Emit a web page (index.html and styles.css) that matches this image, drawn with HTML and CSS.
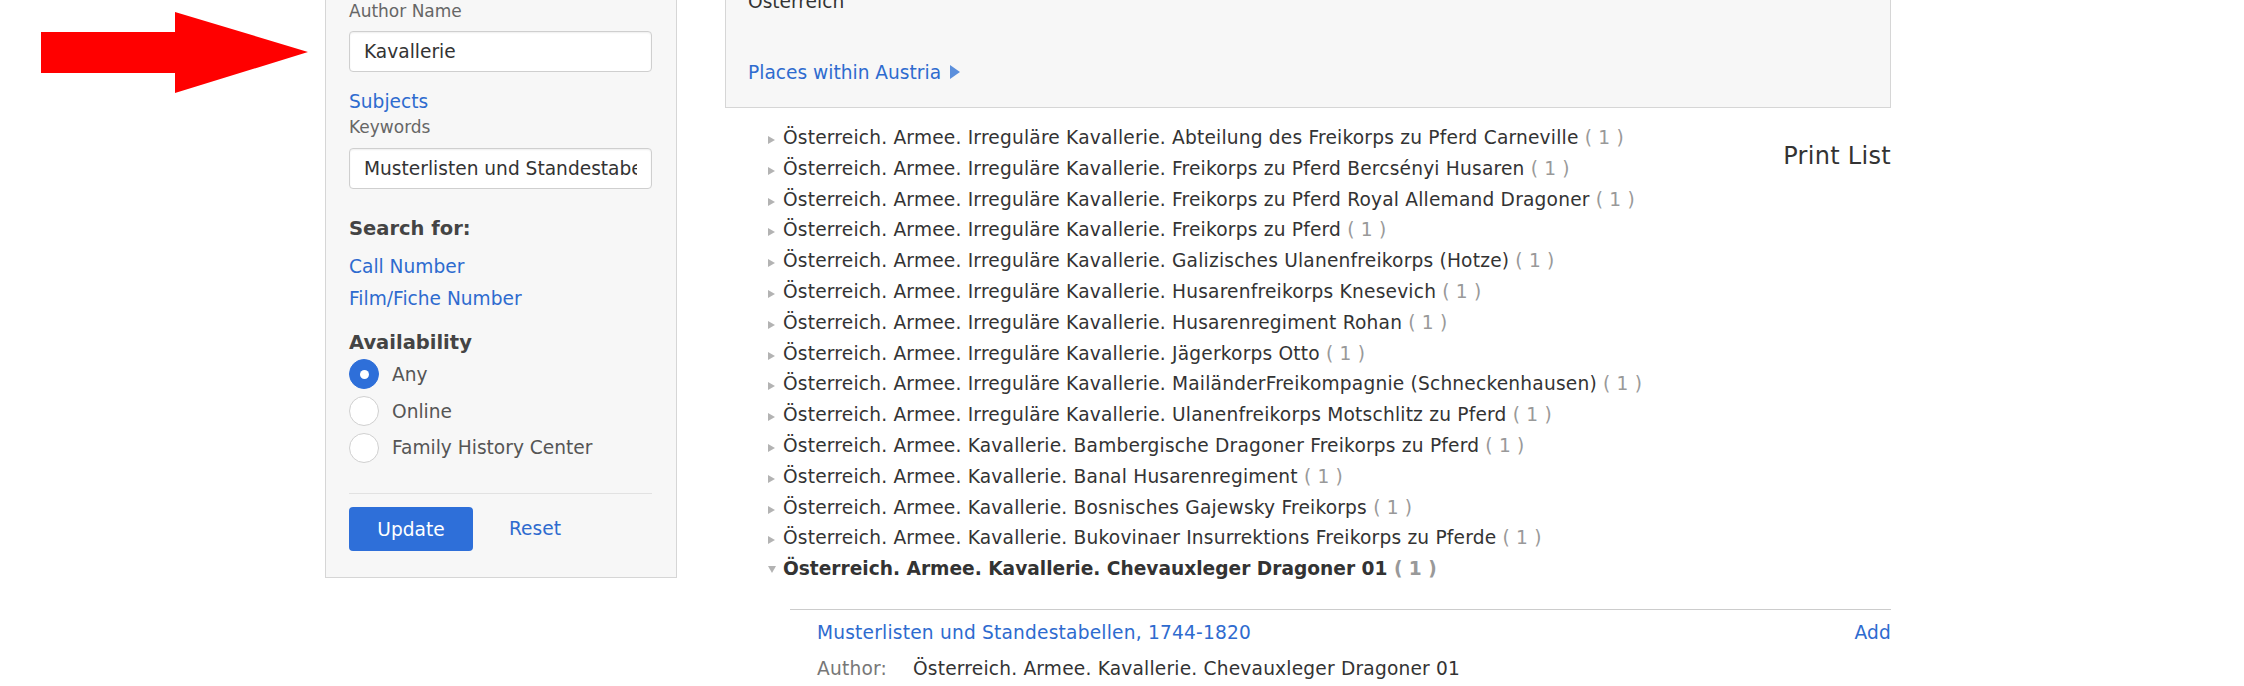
FILE: index.html
```html
<!DOCTYPE html>
<html lang="de">
<head>
  <meta charset="UTF-8" />
  <title>Catalog - Subjects</title>
  <link rel="stylesheet" href="styles.css">
</head>
<body>

  <!-- annotation arrow pointing at the author field -->
  <svg class="pointer-arrow" width="320" height="100" viewBox="0 0 320 100">
    <polygon points="41,32 175,32 175,12 308,52 175,93 175,73 41,73" fill="#ff0000"/>
  </svg>

  <div class="page">

    <aside class="filters">
      <label class="field-label">Author Name</label>
      <input class="text-input" type="text" value="Kavallerie">

      <a class="filter-link subjects" href="#">Subjects</a>
      <label class="field-label keywords">Keywords</label>
      <input class="text-input keywords-input" type="text" value="Musterlisten und Standestabellen, 1744-1820">

      <h3 class="filter-heading search-for">Search for:</h3>
      <a class="filter-link row-link" href="#">Call Number</a>
      <a class="filter-link row-link" href="#">Film/Fiche Number</a>

      <h3 class="filter-heading availability">Availability</h3>
      <div class="radio-row"><span class="radio checked"></span>Any</div>
      <div class="radio-row"><span class="radio"></span>Online</div>
      <div class="radio-row"><span class="radio"></span>Family History Center</div>

      <div class="actions">
        <button class="btn-update">Update</button>
        <a class="filter-link" href="#">Reset</a>
      </div>
    </aside>

    <main class="results">
      <div class="place-box">
        <div class="place-name">Österreich</div>
        <a class="places-within" href="#">Places within Austria <span class="arrow-right"></span></a>
      </div>

      <div class="list-row">
        <ul class="subject-list">
          <li><span class="toggle"></span>Österreich. Armee. Irreguläre Kavallerie. Abteilung des Freikorps zu Pferd Carneville <span class="count">( 1 )</span></li>
          <li><span class="toggle"></span>Österreich. Armee. Irreguläre Kavallerie. Freikorps zu Pferd Bercsényi Husaren <span class="count">( 1 )</span></li>
          <li><span class="toggle"></span>Österreich. Armee. Irreguläre Kavallerie. Freikorps zu Pferd Royal Allemand Dragoner <span class="count">( 1 )</span></li>
          <li><span class="toggle"></span>Österreich. Armee. Irreguläre Kavallerie. Freikorps zu Pferd <span class="count">( 1 )</span></li>
          <li><span class="toggle"></span>Österreich. Armee. Irreguläre Kavallerie. Galizisches Ulanenfreikorps (Hotze) <span class="count">( 1 )</span></li>
          <li><span class="toggle"></span>Österreich. Armee. Irreguläre Kavallerie. Husarenfreikorps Knesevich <span class="count">( 1 )</span></li>
          <li><span class="toggle"></span>Österreich. Armee. Irreguläre Kavallerie. Husarenregiment Rohan <span class="count">( 1 )</span></li>
          <li><span class="toggle"></span>Österreich. Armee. Irreguläre Kavallerie. Jägerkorps Otto <span class="count">( 1 )</span></li>
          <li><span class="toggle"></span>Österreich. Armee. Irreguläre Kavallerie. MailänderFreikompagnie (Schneckenhausen) <span class="count">( 1 )</span></li>
          <li><span class="toggle"></span>Österreich. Armee. Irreguläre Kavallerie. Ulanenfreikorps Motschlitz zu Pferd <span class="count">( 1 )</span></li>
          <li><span class="toggle"></span>Österreich. Armee. Kavallerie. Bambergische Dragoner Freikorps zu Pferd <span class="count">( 1 )</span></li>
          <li><span class="toggle"></span>Österreich. Armee. Kavallerie. Banal Husarenregiment <span class="count">( 1 )</span></li>
          <li><span class="toggle"></span>Österreich. Armee. Kavallerie. Bosnisches Gajewsky Freikorps <span class="count">( 1 )</span></li>
          <li><span class="toggle"></span>Österreich. Armee. Kavallerie. Bukovinaer Insurrektions Freikorps zu Pferde <span class="count">( 1 )</span></li>
          <li class="open"><span class="toggle"></span>Österreich. Armee. Kavallerie. Chevauxleger Dragoner 01 <span class="count">( 1 )</span></li>
        </ul>
        <a class="print-list" href="#">Print List</a>
      </div>

      <div class="title-detail">
        <div class="title-row">
          <a class="title-link" href="#">Musterlisten und Standestabellen, 1744-1820</a>
          <a class="title-link" href="#">Add</a>
        </div>
        <div class="author-row">
          <span class="author-label">Author:</span>
          <span>Österreich. Armee. Kavallerie. Chevauxleger Dragoner 01</span>
        </div>
      </div>
    </main>

  </div>

</body>
</html>
```

FILE: styles.css
```css
body {
  margin: 0;
  background: #fff;
  font-family: "DejaVu Sans", Verdana, sans-serif;
  color: #333;
  overflow: hidden;
}

a {
  color: #2e6bcf;
  text-decoration: none;
}

.pointer-arrow {
  position: absolute;
  left: 0;
  top: 0;
}

.page {
  display: flex;
  align-items: flex-start;
  gap: 48px;
  padding-left: 325px;
  margin-top: -40px;
}

/* left filter panel */
.filters {
  width: 303px;
  background: #f7f7f7;
  border: 1px solid #d6d6d6;
  padding: 39px 24px 26px 23px;
  display: flex;
  flex-direction: column;
  align-items: flex-start;
}

.field-label {
  font-size: 17px;
  line-height: 22px;
  color: #666;
}

.keywords {
  margin-top: 2px;
}

.text-input {
  box-sizing: border-box;
  width: 303px;
  height: 41px;
  margin-top: 9px;
  padding: 0 14px;
  border: 1px solid #cfcfcf;
  border-radius: 4px;
  box-shadow: inset 0 1px 2px rgba(0, 0, 0, 0.07);
  background: #fff;
  font-family: inherit;
  font-size: 18.6px;
  color: #333;
}

.keywords-input {
  margin-top: 10px;
}

.filter-link {
  font-size: 18.6px;
  line-height: 24px;
}

.subjects {
  margin-top: 18px;
}

.filter-heading {
  margin: 13px 0 0;
  font-size: 19.5px;
  line-height: 26px;
  font-weight: bold;
  color: #444;
}

.search-for {
  margin-top: 27px;
  margin-bottom: 9px;
}

.availability {
  margin-top: 15px;
}

.row-link {
  line-height: 32px;
}

.radio-row {
  display: flex;
  align-items: center;
  gap: 13px;
  height: 36.7px;
  font-size: 18.6px;
  color: #555;
}

.radio {
  box-sizing: border-box;
  width: 30px;
  height: 30px;
  border-radius: 50%;
  border: 1px solid #d0d0d0;
  background: #fff;
  display: flex;
  align-items: center;
  justify-content: center;
}

.radio.checked {
  background: #2e6fd9;
  border-color: #2e6fd9;
}

.radio.checked::after {
  content: "";
  width: 9px;
  height: 9px;
  border-radius: 50%;
  background: #fff;
}

.actions {
  align-self: stretch;
  margin-top: 27px;
  padding-top: 13px;
  border-top: 1px solid #e2e2e2;
  display: flex;
  align-items: center;
  gap: 36px;
}

.btn-update {
  width: 124px;
  height: 44px;
  border: none;
  border-radius: 4px;
  background: #2e6fd9;
  color: #fff;
  font-family: inherit;
  font-size: 18.6px;
}

/* right column */
.results {
  width: 1166px;
}

.place-box {
  background: #f7f7f7;
  border: 1px solid #d6d6d6;
  padding: 29px 22px 22px;
}

.place-name {
  font-size: 18.6px;
  line-height: 24px;
  margin-bottom: 47px;
}

.places-within {
  font-size: 18.6px;
  line-height: 24px;
}

.arrow-right {
  display: inline-block;
  width: 0;
  height: 0;
  margin-left: 3px;
  border-left: 10px solid #5b8fdc;
  border-top: 7px solid transparent;
  border-bottom: 7px solid transparent;
}

.list-row {
  display: flex;
  justify-content: space-between;
  align-items: flex-start;
}

.subject-list {
  list-style: none;
  margin: 15px 0 0 43px;
  padding: 0;
  font-size: 18.6px;
  line-height: 30.8px;
  letter-spacing: 0.2px;
  color: #333;
}

.toggle {
  display: inline-block;
  width: 0;
  height: 0;
  margin-right: 8px;
  border-left: 7px solid #b3b3b3;
  border-top: 4.5px solid transparent;
  border-bottom: 4.5px solid transparent;
  vertical-align: 0;
}

.open {
  font-weight: bold;
  letter-spacing: 0;
}

.open .toggle {
  border-left: 4.5px solid transparent;
  border-right: 4.5px solid transparent;
  border-top: 7px solid #b3b3b3;
  border-bottom: none;
  margin-right: 7px;
  vertical-align: 2px;
}

.count {
  color: #999;
}

.print-list {
  margin-top: 33px;
  font-size: 24px;
  line-height: 30px;
  letter-spacing: 0.3px;
  color: #333;
}

.title-detail {
  margin: 24px 0 0 65px;
  border-top: 1px solid #ccc;
  padding: 8px 0 0 27px;
  font-size: 18.6px;
  line-height: 30px;
  letter-spacing: 0.2px;
}

.title-row {
  display: flex;
  justify-content: space-between;
}

.author-row {
  margin-top: 6px;
  display: flex;
  gap: 26px;
}

.author-label {
  color: #777;
}
```
